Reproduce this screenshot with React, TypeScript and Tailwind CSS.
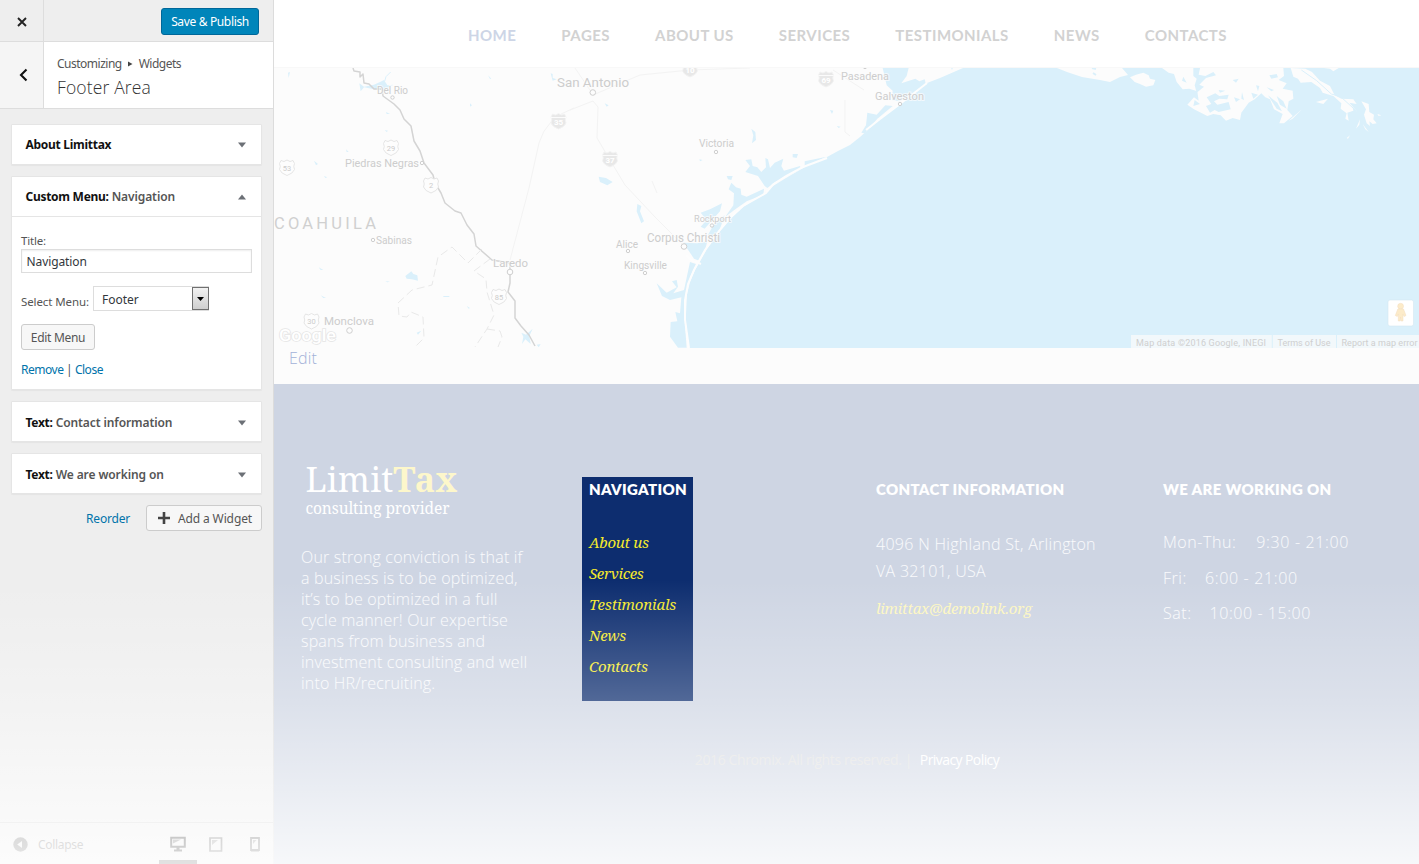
import React from "react";

const ui = "font-['Noto_Sans','Open_Sans',sans-serif]";

function Caret({ up = false }: { up?: boolean }) {
  return (
    <svg width="8" height="6" viewBox="0 0 8 6" className="shrink-0">
      <path d={up ? "M0 5.5L4 .5L8 5.5Z" : "M0 .5H8L4 5.5Z"} fill="#6c7076" />
    </svg>
  );
}

function WidgetHead({ name, detail, open = false }: { name: string; detail?: string; open?: boolean }) {
  return (
    <div className="flex h-[39px] items-center justify-between pl-[13.5px] pr-[15px] text-[12px] tracking-[-0.28px]">
      <span className="whitespace-nowrap font-bold text-[#111]">
        {name}
        {detail && <span className="font-semibold tracking-[-0.1px] text-[#555]"> {detail}</span>}
      </span>
      <Caret up={open} />
    </div>
  );
}

const card = "rounded-[1px] border border-[#e5e5e5] bg-white shadow-[0_1px_1px_rgba(0,0,0,0.04)]";

function Sidebar() {
  return (
    <aside className={`flex h-full w-[274px] shrink-0 flex-col border-r border-[#dcdcdc] bg-[#eee] text-[12px] text-[#555] ${ui}`}>
      <div className="flex h-[42px] border-b border-[#ddd]">
        <button className="flex w-[44px] items-center justify-center border-r border-[#ddd] pt-[2px]">
          <svg width="10" height="10" viewBox="0 0 10 10"><path d="M1 1L9 9M9 1L1 9" stroke="#222" strokeWidth="1.9" /></svg>
        </button>
        <div className="flex flex-1 items-center justify-end pr-[14px] pt-[2px]">
          <button className="h-[27px] w-[98px] whitespace-nowrap rounded-[3px] border border-[#006799] bg-[#0085ba] text-[12px] leading-[26px] tracking-[-0.35px] text-white">Save &amp; Publish</button>
        </div>
      </div>
      <div className="flex h-[67px] border-b border-[#ddd] bg-white">
        <button className="flex w-[44px] items-center justify-center border-r border-[#ddd] bg-[#f5f5f5] pl-[3px]">
          <svg width="9" height="14" viewBox="0 0 9 14"><path d="M7.5 1.5L2 7L7.5 12.5" fill="none" stroke="#111" strokeWidth="2.1" /></svg>
        </button>
        <div className="pl-[13px] pt-[13px]">
          <div className="flex h-[18px] items-center text-[12px] tracking-[-0.5px]">
            Customizing
            <svg width="5" height="6" viewBox="0 0 5 6" className="ml-[6px] mr-[6px]"><path d="M0 .5L4.5 3L0 5.5Z" fill="#444" /></svg>
            Widgets
          </div>
          <div className="mt-[2px] h-[24px] font-['Open_Sans','Noto_Sans',sans-serif] text-[17.5px] font-light leading-[24px] tracking-[0.15px] text-[#333]">Footer Area</div>
        </div>
      </div>
      <div className="flex flex-1 flex-col px-[11px] pt-[15px]">
        <section className={`${card} h-[41px]`}><WidgetHead name="About Limittax" /></section>
        <section className={`${card} mt-[11px] h-[214px]`}>
          <WidgetHead name="Custom Menu:" detail="Navigation" open />
          <div className="h-[173px] border-t border-[#e5e5e5] px-[9px] pt-[16px] text-[#555]">
            <div className="h-[16px] text-[11.5px] leading-[16px] tracking-[-0.2px]">Title:</div>
            <div className="h-[24px] w-[231px] border border-[#ddd] px-[4.5px] text-[12px] leading-[23.500px] tracking-[-0.1px] text-[#32373c] shadow-[inset_0_1px_2px_rgba(0,0,0,0.07)]">Navigation</div>
            <div className="mt-[13px] flex h-[26px] items-start">
              <span className="w-[72px] whitespace-nowrap pt-[8px] text-[11.5px] leading-[16px] tracking-[-0.1px]">Select Menu:</span>
              <div className="flex h-[25px] w-[116px] border border-r-0 border-[#ddd] text-[#32373c]">
                <span className="flex-1 pl-[8px] text-[12px] leading-[25.500px]">Footer</span>
                <span className="flex w-[17px] items-center justify-center border border-[#707070] bg-gradient-to-b from-[#f2f2f2] to-[#cfcfcf]">
                  <svg width="7" height="4" viewBox="0 0 7 4"><path d="M0 0H7L3.500 4Z" fill="#000" /></svg>
                </span>
              </div>
            </div>
            <button className="mt-[12px] block h-[26px] w-[74px] rounded-[3px] border border-[#ccc] bg-[#f7f7f7] text-[12px] leading-[26px] tracking-[-0.3px]">Edit Menu</button>
            <div className="mt-[11px] whitespace-nowrap text-[12px] leading-[18px] tracking-[-0.48px]">
              <a className="text-[#0073aa]">Remove</a> | <a className="text-[#0073aa]">Close</a>
            </div>
          </div>
        </section>
        <section className={`${card} mt-[11px] h-[41px] pt-px`}><WidgetHead name="Text:" detail="Contact information" /></section>
        <section className={`${card} mt-[11px] h-[41px] pt-px`}><WidgetHead name="Text:" detail="We are working on" /></section>
        <div className="mt-[11px] flex h-[26px] items-center justify-end">
          <a className="mr-[16px] pt-px text-[12px] tracking-[-0.2px] text-[#0073aa]">Reorder</a>
          <button className="flex h-[26px] w-[116px] items-center justify-between rounded-[3px] border border-[#ccc] bg-[#f7f7f7] pl-[11px] pr-[9px] pt-px text-[12px] tracking-[-0.12px]">
            <svg width="12" height="12" viewBox="0 0 12 12" className="-mt-px"><path d="M6 0V12M0 6H12" stroke="#444" strokeWidth="2.600" /></svg>
            Add a Widget
          </button>
        </div>
      </div>
      <div className="flex h-[42px] items-stretch border-t border-[#d5d5d5] text-[#777]">
        <div className="flex flex-1 items-center pl-[13px] pt-[2px]">
          <svg width="15" height="15" viewBox="0 0 15 15"><circle cx="7.500" cy="7.500" r="7.200" fill="#777" /><path d="M9 4V11L4.200 7.500Z" fill="#eee" /></svg>
          <span className="ml-[10px] tracking-[-0.3px]">Collapse</span>
        </div>
        <div className="flex w-[38px] items-center justify-center border-b-[4px] border-[#555] pt-[4px]">
          <svg width="16" height="16" viewBox="0 0 16 16"><path d="M1.200 1.700H14.800V10.800H1.200Z" fill="none" stroke="#333" strokeWidth="2" /><path d="M3 3.500H11L3 7.500Z" fill="#777" /><path d="M6.500 11H9.500V13.500H12V15.500H4V13.500H6.500Z" fill="#333" /></svg>
        </div>
        <div className="flex w-[38px] items-center justify-center pt-px">
          <svg width="14" height="15" viewBox="0 0 14 15"><path d="M1 1H12.500V14H1Z" fill="none" stroke="#666" strokeWidth="1.700" /><path d="M3 3H9L3 8Z" fill="#999" /></svg>
        </div>
        <div className="flex w-[38px] items-center justify-center pl-px pt-px">
          <svg width="10" height="15" viewBox="0 0 10 15"><path d="M1 1H9V13H1Z" fill="none" stroke="#666" strokeWidth="1.800" /><path d="M3 3H6.500L3 7Z" fill="#999" /><path d="M1 12H9V14.500H1Z" fill="#666" /></svg>
        </div>
      </div>
    </aside>
  );
}

function Shield({ x, y, n, solid = false }: { x: number; y: number; n: string; solid?: boolean }) {
  return (
    <g transform={`translate(${x} ${y})`}>
      <path d="M-6 -7L-3 -6L0 -7.500L3 -6L6 -7L7.500 -4Q6 -1 7.500 2Q6 6 0 8Q-6 6 -7.500 2Q-6 -1 -7.500 -4Z" fill={solid ? "#e8e8e8" : "#fdfdfd"} stroke={solid ? "#f3f3f3" : "#e2e2e2"} strokeWidth=".9" />
      {solid && <path d="M-7.500 -3.500H7.500" stroke="#fff" strokeWidth=".8" />}
      <text textAnchor="middle" y={solid ? 4 : 3} fontSize={solid ? 8 : 7.500} fontWeight={solid ? 700 : 400} fill={solid ? "#fff" : "#ccc"}>{n}</text>
    </g>
  );
}

type Place = [string, number, number, number, number, number, number];
const places: Place[] = [
  ["Del Rio", 377, 94, 31, 10, 392.500, 97.500],
  ["Piedras Negras", 345, 166.500, 74, 10.500, 422, 163],
  ["Sabinas", 376, 244, 36, 10, 373, 240],
  ["Laredo", 493, 267, 35, 11, 510, 272],
  ["Monclova", 324, 325, 50, 11, 349.500, 330.500],
  ["San Antonio", 557, 87, 72, 12.500, 592.800, 92.500],
  ["Victoria", 699, 147, 35, 10, 716, 152],
  ["Rockport", 694, 222, 37, 9.500, 712, 225.500],
  ["Corpus Christi", 647, 241.500, 73, 11.500, 684, 246.500],
  ["Alice", 616, 247.500, 22, 10, 628, 251],
  ["Kingsville", 624, 269, 43, 10, 645, 273],
  ["Pasadena", 841, 80, 48, 10.500, 865, 67],
  ["Galveston", 875, 99.500, 49, 10.500, 900, 104],
];

function MapView() {
  return (
    <svg viewBox="274 68 1145 280" className="block h-[280px] w-[1145px] bg-[#fcfcfc] font-[Roboto,sans-serif]">
      <g fill="#daf0fb">
        <path d="M963 68L940 78L927 83L913 91L900 104L880 119L870 128L860 137L850 145L838 151L827 157L803 168L786 178L773 186L765 193L743 207L730 219L720 231L707 249L695 270L690 282L687 294L685.700 320L689 348H1419V68H1122L1128 75L1120 77L1110 82L1100 80L1082 77L1067 72L1057 68Z" />
        <g transform="translate(570 60) scale(.33333)">
          <path d="M526 300L544 298L548 318L562 322L574 336L588 322L586 294L594 298L600 324L614 308L640 296L634 318L642 332L690 318L694 328L660 344L616 366L592 384L584 378L564 348L526 336L540 318Z" />
          <path d="M476 388L484 368L498 382L512 386L514 404L530 410L582 386L580 404L530 424L498 446L466 470L490 436L492 400Z" />
          <path d="M704 304L770 290L740 304L704 326ZM880 218L900 180V206ZM392 458L420 448L456 430L450 454L430 476L404 506L392 500L410 480ZM446 478L464 466L450 506L436 526L414 524L430 496ZM340 548L382 550L412 544L404 574L388 602L372 596L356 572ZM360 606L378 612L360 652L346 704L346 810L350 863H324L300 830L302 786L322 784L316 756L330 760L334 712L300 720L276 708L260 670L290 698L320 682L306 664L320 660L324 680L310 700L342 690Z" />
          <path d="M86 350L108 354L128 366L112 376L90 366ZM202 432L214 438L210 454L222 484L214 490L200 454ZM544 206L556 216L558 240L546 250L550 226ZM668 282L684 282L680 294L668 292ZM470 348L488 348L484 360L474 358ZM780 150L790 152L786 162ZM104 130L116 136L110 140ZM388 298L398 300L390 304ZM800 198L812 200L806 204Z" />
        </g>
        <g transform="translate(860 60) scale(.33333)">
          <path d="M68 24H146L140 48L124 70L166 56L178 64L194 58L198 74L164 92L142 112L118 124L96 120L98 92L80 76ZM22 158L50 164L76 136L98 138L52 176L14 220L4 218L18 196ZM272 20H280L276 30Z" />
        </g>
        <g transform="translate(274 60) scale(.33333)">
          <path d="M256 70L270 80L300 74L318 66L330 60L340 76L358 74L330 90L300 88L270 82L260 94ZM394 648L412 634L418 642L430 646L432 662L414 658L398 656ZM742 818L756 824L776 806L766 828L770 852L754 838L744 852L748 830ZM788 854L800 852L794 862ZM42 38L48 36L44 54ZM336 156L348 162L338 162ZM120 302L132 312L126 316ZM216 268L224 276L218 276ZM332 210L342 212L338 216ZM830 40L836 42L836 54L848 58L836 62ZM588 130L594 136L588 140ZM134 622L148 630L140 630ZM140 706L156 714L148 714ZM508 708H526V711H508ZM578 738L588 744L584 746ZM642 46L652 56L648 57ZM334 663L348 665L340 667ZM150 348L160 352L154 354ZM428 818L442 812L432 824Z" />
          <path d="M332 64L336 50L350 36" fill="none" stroke="#daf0fb" strokeWidth="3" />
        </g>
      </g>
      <g fill="none" stroke="#fdfdfd">
        <path d="M827 158L803 167L786 176L773 184.500L766 193L743 206L730 218L719 231L705 250L694 270L688 284L685 300L685 320L689 348" strokeWidth="2" />
        <path d="M927 83L900 104L880 119L866 130M701 264L691 260L686 255" strokeWidth="2" />
      </g>
      <g fill="#fcfcfc" transform="translate(1100 60) scale(.33333)">
        <path d="M90 52L108 44L130 38L146 46L150 56L166 60L160 76L138 80L120 72L104 66Z" />
        <path d="M186 24H550L552 48L536 60L560 70L548 86L578 92L580 116L566 124L562 150L578 168L552 190H538L548 162L522 148L510 118L496 112L484 100L464 118L446 128L424 158L420 180L398 174L378 182L362 166L340 162L322 168L282 148L262 134L282 112L296 122L292 94L268 86L248 88L230 66L222 42L206 38Z" />
        <path d="M572 24L580 50L594 56L602 68L634 66L660 84L668 98L700 108L724 130L722 146L740 160L736 176L746 182L742 158L760 152L758 142L774 158L748 128L770 132L760 118L724 116L704 106L690 78L660 62L636 36L616 26ZM648 126L684 116L670 132ZM672 24H716L700 34L690 26ZM784 124L806 132L808 156L822 164L820 178L830 190L818 192L808 184L810 198L800 190L792 164L798 148ZM780 178L778 194L768 206ZM788 192L806 216L796 208ZM566 182L606 148L578 176ZM832 162L844 166L836 168ZM740 234L750 226L744 236Z" />
      </g>
      <g fill="#daf0fb" transform="translate(1100 60) scale(.33333)">
        <path d="M280 24H300L296 44L316 48L340 36L348 46L318 54L298 74L312 80L290 98L284 76L290 56L280 48ZM320 112L346 100L358 108L386 104L382 118L358 116L342 124L352 134L386 126L392 148L356 156L344 150L330 158L318 138L334 132ZM284 120L300 132L280 138ZM402 112L420 118L408 126ZM426 96L432 120L424 116ZM454 98L474 104L460 116ZM468 76L478 78L474 94ZM500 82L522 90L514 94ZM508 46L530 42L534 52L514 56ZM398 60L416 56L408 68ZM356 90L376 92L360 98ZM530 108L550 124L560 146L540 134ZM250 50L260 68L246 62ZM556 26L566 24L572 46L560 44ZM504 106L532 128L546 154L530 146Z" />
        <path d="M604 30L650 62L694 102L722 110L770 154" fill="none" stroke="#daf0fb" strokeWidth="3" />
      </g>
      <path d="M1092 68L1096 69M1093 73L1096 75" stroke="#daf0fb" strokeWidth="2" />
      <g fill="none" stroke="#f3f3f3" strokeWidth="1">
        <path d="M574 108Q546 118 539 143L529 188L510 260M570 110L593 101L598 107L597 138L610 160L625 185L655 217L684 246M593 95L640 75L690 70L750 68M575 68L592 93M845 100V132L850 136M833 70L864 90M652 181L657 193" />
      </g>
      <path d="M353 68L354 71L360 72V77L363 74L364 83L369 84L374 89L382 89L383 96L394 104L400 110L404 119L411 126L414 141L420 151L424 163L433 175L435 183L441 193L445 203L455 211L461 213L467 225L474 234L476 246L492 260L510 263V283L508 292L515 301V318L521 326L529 335L535 346" fill="none" stroke="#d4d4d4" strokeWidth="1.500" strokeLinejoin="round" />
      <path d="M482 249L468 263L452 247L438 257L432 285L412 290L398 303L399 316L407 317L411 312L423 317L424 338L416 346M490 259L474 271L486 279L487 292L494 315L487 329L475 347M487 329L500 331L502 337L498 347" fill="none" stroke="#e9e9e9" strokeDasharray="8 4" />
      <Shield x={287} y={167.500} n="53" />
      <Shield x={391} y={147.500} n="29" />
      <Shield x={431} y={185} n="2" />
      <Shield x={311.500} y={321} n="30" />
      <Shield x={499} y={296.500} n="85" />
      <Shield x={558.500} y={121} n="35" solid />
      <Shield x={610} y={159} n="37" solid />
      <Shield x={690} y={69} n="10" solid />
      <Shield x={826} y={79} n="69" solid />
      {places.map(([name, x, y, w, size, cx, cy]) => (
        <g key={name}>
          <circle cx={cx} cy={cy} r={size > 10.500 ? 2.800 : 1.700} fill="#fdfdfd" stroke="#cfcfcf" strokeWidth="1" />
          <text x={x} y={y} textLength={w} lengthAdjust="spacingAndGlyphs" fontSize={size + 0.4} fill="#cdcdcd" stroke="#fdfdfd" strokeWidth="2" strokeOpacity=".7" paintOrder="stroke">{name}</text>
        </g>
      ))}
      <text x="274" y="228.500" textLength="102" fontSize="16.500" fill="#d0d0d0">COAHUILA</text>
      <text x="279" y="341" textLength="57" lengthAdjust="spacingAndGlyphs" fontSize="17" fontWeight="500" fill="#fff" stroke="#e5e5e5" strokeWidth="1.500" paintOrder="stroke">Google</text>
      <g>
        <rect x="1388" y="300" width="25.500" height="26" rx="2" fill="#fff" stroke="#d3e8f2" strokeWidth=".6" />
        <circle cx="1400.600" cy="306.200" r="2.900" fill="#fcebc9" stroke="#f3dcc0" strokeWidth=".5" />
        <path d="M1397.800 309H1403.500L1406 315.500L1404 316.500L1403 314V321H1401L1400.600 317L1400.200 321H1398.300V314L1397.300 316.500L1395.300 315.500Z" fill="#fcebc9" stroke="#f3dcc0" strokeWidth=".5" />
      </g>
      <rect x="1131" y="335" width="288" height="13" fill="#f2f8fb" />
      <path d="M1272.300 335V348M1336.500 335V348" stroke="#daf0fb" />
      <g fontSize="9" fill="#cfcfcf">
        <text x="1136" y="345.700" textLength="130">Map data ©2016 Google, INEGI</text>
        <text x="1277.500" y="345.700" textLength="53">Terms of Use</text>
        <text x="1341.500" y="345.700" textLength="76">Report a map error</text>
      </g>
    </svg>
  );
}

const body = "font-['Open_Sans','Noto_Sans',sans-serif] font-light text-white/90";
const heading = "whitespace-nowrap font-[Lato,sans-serif] text-[15px] font-extrabold leading-[24px] tracking-[0.33px] pb-[2px] text-white";
const serif = "font-['Noto_Serif','DejaVu_Serif_Condensed','DejaVu_Serif','Liberation_Serif',serif]";

function Footer() {
  return (
    <footer className="flex flex-1 flex-col bg-[#ced5e3]">
      <div className="flex h-[317px] pl-[27px]">
        <div className="w-[281px] pt-[74px]">
          <div className={`${serif} whitespace-nowrap pl-[4.5px] text-white`}>
            <div className="h-[40px] text-[34px] leading-[42px] tracking-[0.15px]">
              Limit<span className="font-bold text-[#fdf7cb]">Tax</span>
            </div>
            <div className="mt-[1px] h-[18px] text-[15.5px] leading-[18px] tracking-[-0.1px]">consulting provider</div>
          </div>
          <div className={`${body} mt-[30px] whitespace-nowrap text-[16px] leading-[21px] tracking-[0.18px]`}>
            <div>Our strong conviction is that if</div>
            <div>a business is to be optimized,</div>
            <div>it’s to be optimized in a full</div>
            <div>cycle manner! Our expertise</div>
            <div>spans from business and</div>
            <div>investment consulting and well</div>
            <div>into HR/recruiting.</div>
          </div>
        </div>
        <nav className="mt-[93px] h-[224px] w-[111px] bg-[#0d2d6f] pl-[7px]">
          <h3 className={heading}>NAVIGATION</h3>
          <ul className={`mt-[23.5px] ${serif} text-[15px] italic leading-[31.200px] tracking-[-0.3px] text-[#f5e92c]`}>
            <li>About us</li>
            <li>Services</li>
            <li className="tracking-[-0.15px]">Testimonials</li>
            <li>News</li>
            <li>Contacts</li>
          </ul>
        </nav>
        <div className="ml-[183px] w-[287px] pt-[93px]">
          <h3 className={heading}>CONTACT INFORMATION</h3>
          <div className={`${body} mt-[28px] whitespace-nowrap text-[16px] leading-[26.500px] tracking-[0.3px]`}>
            <div>4096 N Highland St, Arlington</div>
            <div>VA 32101, USA</div>
          </div>
          <div className={`mt-[11px] ${serif} text-[15px] italic leading-[26px] tracking-[-0.25px] text-[#fdf7c0]`}>limittax@demolink.org</div>
        </div>
        <div className="pt-[93px]">
          <h3 className={heading}>WE ARE WORKING ON</h3>
          <div className={`${body} mt-[22px] whitespace-nowrap text-[16px] leading-[35.500px] tracking-[0.55px]`}>
            <div className="flex gap-[20px]"><span>Mon-Thu:</span><span className="tracking-[0.65px]">9:30 - 21:00</span></div>
            <div className="flex gap-[18px]"><span>Fri:</span><span className="tracking-[0.65px]">6:00 - 21:00</span></div>
            <div className="flex gap-[18px]"><span>Sat:</span><span>10:00 - 15:00</span></div>
          </div>
        </div>
      </div>
      <div className={`${body} mt-[48px] flex justify-center whitespace-nowrap pl-[1px] text-[14px] leading-[22px]`}>
        <span className="w-[225px] font-normal tracking-[-0.38px] text-[#dfdfde]">2016 Chromix. All rights reserved. |</span>
        <a className="font-normal tracking-[-0.58px] text-white">Privacy Policy</a>
      </div>
    </footer>
  );
}

const nav = "font-[Lato,sans-serif] text-[15px] font-bold leading-[20px] tracking-[0.45px] whitespace-nowrap";

export default function App() {
  return (
    <div className="relative flex h-[864px] w-[1419px] overflow-hidden bg-white">
      <Sidebar />
      <main className="flex h-full w-[1145px] flex-col">
        <header className={`${nav} flex h-[68px] items-center justify-between border-b border-[#f8f8f8] pl-[194px] pr-[192px] pt-[2px] text-[#d2d2d2]`}>
          <a className="text-[#cdd5e6]">HOME</a>
          <a>PAGES</a>
          <a>ABOUT US</a>
          <a>SERVICES</a>
          <a>TESTIMONIALS</a>
          <a>NEWS</a>
          <a>CONTACTS</a>
        </header>
        <MapView />
        <div className="h-[36px] bg-[#fcfcfc] pl-[15px] font-['Open_Sans',sans-serif] text-[16px] font-light leading-[20px] tracking-[0.2px] text-[#a3b2d8]">Edit</div>
        <Footer />
      </main>
      <div className="pointer-events-none absolute inset-x-0 bottom-0 h-[284px] bg-[linear-gradient(to_bottom,rgba(255,255,255,0)_0%,rgba(255,255,255,0.28)_42%,rgba(255,255,255,0.54)_70%,rgba(255,255,255,0.83)_100%)]" />
    </div>
  );
}
